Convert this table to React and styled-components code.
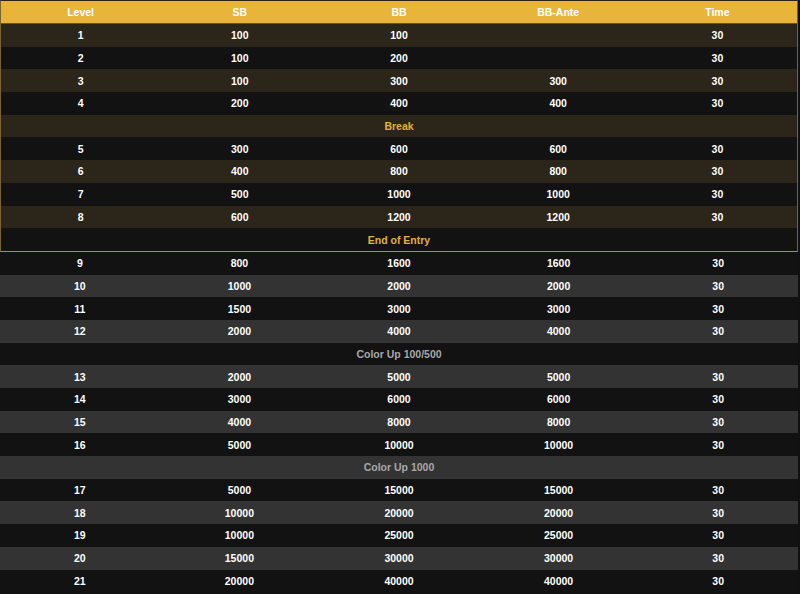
import React from 'react';
import styled, { createGlobalStyle } from 'styled-components';

const GlobalStyle = createGlobalStyle`
  html, body {
    margin: 0;
    padding: 0;
    background: #111111;
  }
  body {
    font-family: "Liberation Sans", Arial, sans-serif;
  }
`;

const blindsTop = [
  { level: 1, sb: 100, bb: 100, ante: '', time: 30 },
  { level: 2, sb: 100, bb: 200, ante: '', time: 30 },
  { level: 3, sb: 100, bb: 300, ante: 300, time: 30 },
  { level: 4, sb: 200, bb: 400, ante: 400, time: 30 },
  { label: 'Break' },
  { level: 5, sb: 300, bb: 600, ante: 600, time: 30 },
  { level: 6, sb: 400, bb: 800, ante: 800, time: 30 },
  { level: 7, sb: 500, bb: 1000, ante: 1000, time: 30 },
  { level: 8, sb: 600, bb: 1200, ante: 1200, time: 30 },
  { label: 'End of Entry' },
];

const blindsBottom = [
  { level: 9, sb: 800, bb: 1600, ante: 1600, time: 30 },
  { level: 10, sb: 1000, bb: 2000, ante: 2000, time: 30 },
  { level: 11, sb: 1500, bb: 3000, ante: 3000, time: 30 },
  { level: 12, sb: 2000, bb: 4000, ante: 4000, time: 30 },
  { label: 'Color Up 100/500' },
  { level: 13, sb: 2000, bb: 5000, ante: 5000, time: 30 },
  { level: 14, sb: 3000, bb: 6000, ante: 6000, time: 30 },
  { level: 15, sb: 4000, bb: 8000, ante: 8000, time: 30 },
  { level: 16, sb: 5000, bb: 10000, ante: 10000, time: 30 },
  { label: 'Color Up 1000' },
  { level: 17, sb: 5000, bb: 15000, ante: 15000, time: 30 },
  { level: 18, sb: 10000, bb: 20000, ante: 20000, time: 30 },
  { level: 19, sb: 10000, bb: 25000, ante: 25000, time: 30 },
  { level: 20, sb: 15000, bb: 30000, ante: 30000, time: 30 },
  { level: 21, sb: 20000, bb: 40000, ante: 40000, time: 30 },
];

const App = () => {
  const renderRows = (rows, variant) =>
    rows.map((row, index) =>
      row.label ? (
        <Row key={index} variant={variant} odd={index % 2 === 1}>
          <Note variant={variant}>{row.label}</Note>
        </Row>
      ) : (
        <Row key={index} variant={variant} odd={index % 2 === 1}>
          <Cell>{row.level}</Cell>
          <Cell>{row.sb}</Cell>
          <Cell>{row.bb}</Cell>
          <Cell>{row.ante}</Cell>
          <Cell>{row.time}</Cell>
        </Row>
      )
    );

  return (
    <>
      <GlobalStyle />
      <Table>
        <GoldSection>
          <Header>
            <HeadCell>Level</HeadCell>
            <HeadCell>SB</HeadCell>
            <HeadCell>BB</HeadCell>
            <HeadCell>BB-Ante</HeadCell>
            <HeadCell>Time</HeadCell>
          </Header>
          {renderRows(blindsTop, 'gold')}
        </GoldSection>
        <div>{renderRows(blindsBottom, 'gray')}</div>
      </Table>
    </>
  );
};

const Table = styled.div`
  width: 798px;
  display: flex;
  flex-direction: column;
`;

const GoldSection = styled.div`
  border: 1px solid #7a6330;
  border-bottom-color: #a98d4f;
  border-top-color: #2a2418;
`;

const Header = styled.div`
  display: grid;
  grid-template-columns: repeat(5, 1fr);
  height: 22px;
  align-items: center;
  background: #e8b43a;
  border-bottom: 1px solid #6b5424;
`;

const HeadCell = styled.div`
  text-align: center;
  color: #ffffff;
  font-weight: bold;
  font-size: 10.5px;
`;

const rowBg = ({ variant, odd }) => {
  if (variant === 'gold') return odd ? '#121212' : '#2c251a';
  return odd ? '#333333' : '#121212';
};

const Row = styled.div`
  display: grid;
  grid-template-columns: repeat(5, 1fr);
  height: 22.7px;
  align-items: center;
  background: ${rowBg};
`;

const Cell = styled.div`
  text-align: center;
  color: #ffffff;
  font-weight: bold;
  font-size: 10.5px;
`;

const Note = styled.div`
  grid-column: 1 / -1;
  text-align: center;
  font-weight: bold;
  font-size: 10.5px;
  color: ${({ variant }) => (variant === 'gold' ? '#e3b236' : '#a8a8a8')};
`;

export default App;
